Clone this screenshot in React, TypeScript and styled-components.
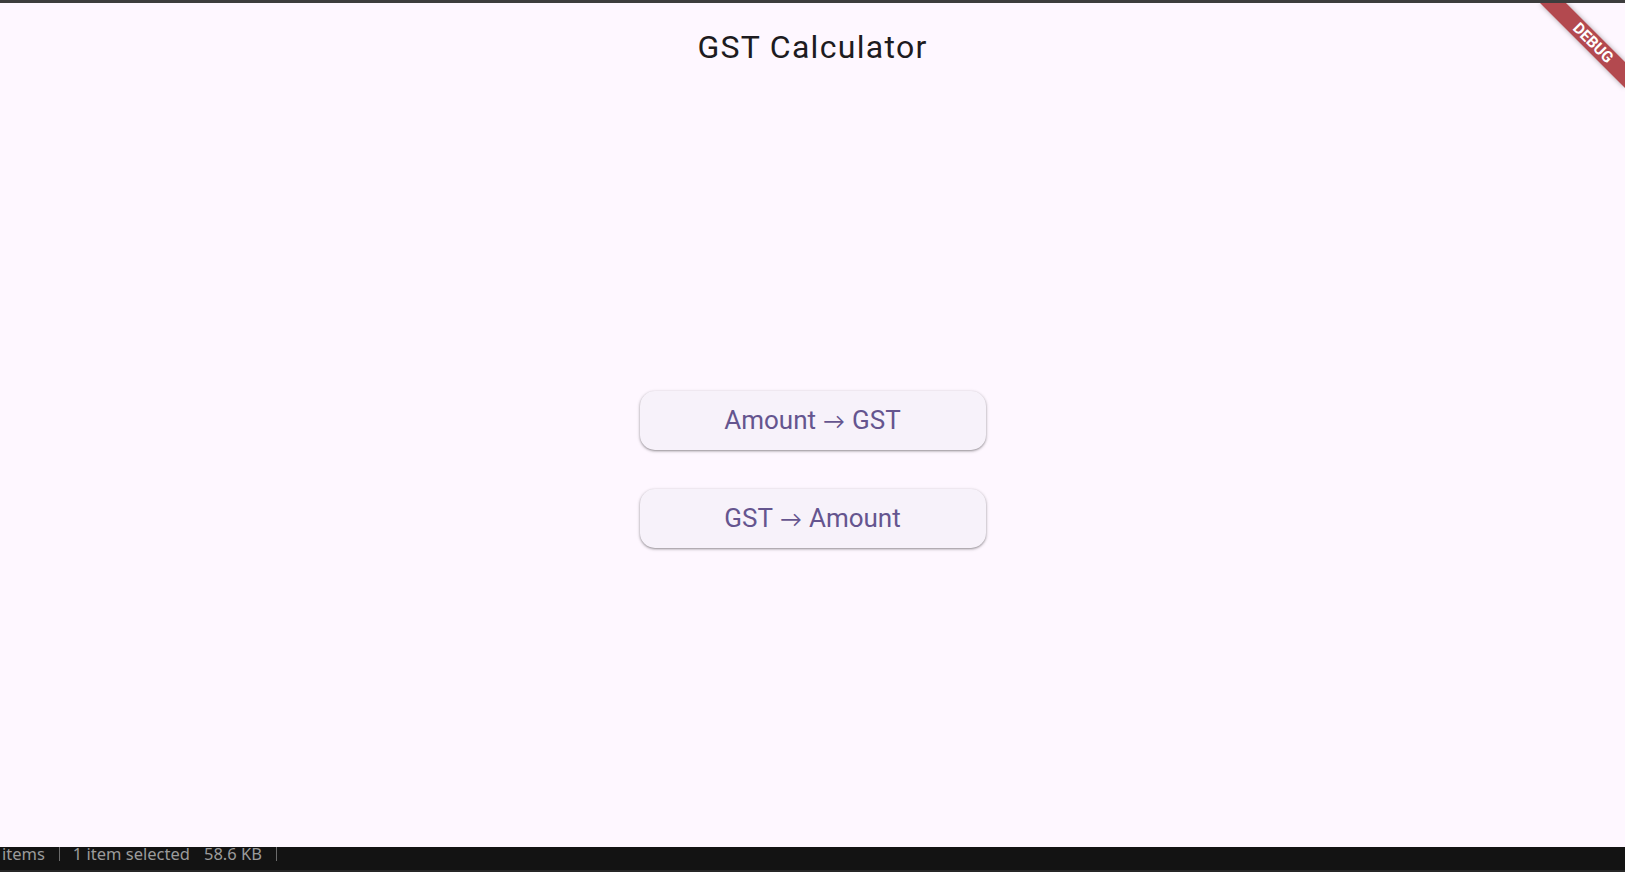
import styled, { createGlobalStyle } from "styled-components";

const GlobalStyle = createGlobalStyle`
  html, body {
    margin: 0;
    padding: 0;
    background: #131313;
  }
  #root {
    height: 872px;
  }
`

const Window = styled.div`
  display: flex;
  flex-direction: column;
  height: 872px;
  border-top: 3px solid #3d3d3d;
  box-sizing: border-box;
`

const AppArea = styled.div`
  position: relative;
  display: flex;
  flex-direction: column;
  height: 844px;
  background: #fef7ff;
  overflow: hidden;
`

const AppBar = styled.header`
  display: flex;
  align-items: center;
  justify-content: center;
  height: 88px;
  flex-shrink: 0;
`

const Title = styled.h1`
  margin: 0;
  font-family: Roboto, "Liberation Sans", sans-serif;
  font-weight: 400;
  font-size: 32px;
  color: #1d1b20;
  letter-spacing: 1.3px;
`

const Body = styled.main`
  flex: 1;
  display: flex;
  flex-direction: column;
  align-items: center;
  justify-content: center;
  gap: 39px;
`

const Button = styled.button`
  display: flex;
  align-items: center;
  justify-content: center;
  width: 346px;
  height: 59px;
  border: none;
  border-radius: 15px;
  background: #f7f2fa;
  color: #65558f;
  font-family: Roboto, "Liberation Sans", sans-serif;
  font-size: 26px;
  font-weight: 400;
  cursor: pointer;
  box-shadow: 0 1px 2px rgba(0, 0, 0, 0.3), 0 1px 3px 1px rgba(0, 0, 0, 0.12);
`

const Arrow = styled.span`
  font-family: Lato, sans-serif;
  font-size: 22px;
  margin: 0 7px;
`

const Banner = styled.svg`
  position: absolute;
  top: 0;
  right: 0;
  pointer-events: none;
`

const StatusBar = styled.footer`
  display: flex;
  align-items: center;
  height: 25px;
  box-sizing: border-box;
  padding-bottom: 11px;
  border-bottom: 2px solid #262626;
  background: #131313;
  font-family: "Noto Sans", "Open Sans", sans-serif;
  font-size: 16.5px;
  color: #9b9b9b;
  white-space: nowrap;
`

const StatusText = styled.span<{ $left: number }>`
  margin-left: ${({ $left }) => $left}px;
`

const Divider = styled.span<{ $left: number }>`
  margin-left: ${({ $left }) => $left}px;
  width: 1px;
  height: 15px;
  background: #6b6b6b;
`

function DebugBanner() {
  return (
    <Banner width="90" height="90" viewBox="0 0 90 90">
      <defs>
        <filter id="bshadow" x="-20%" y="-20%" width="140%" height="140%">
          <feDropShadow dx="0" dy="0" stdDeviation="2.5" floodColor="#000" floodOpacity="0.35" />
        </filter>
      </defs>
      <polygon points="5,0 31,0 90,59 90,85" fill="#b34a4f" filter="url(#bshadow)" />
      <text
        x="58"
        y="40"
        transform="rotate(45 58 40)"
        textAnchor="middle"
        dominantBaseline="central"
        fill="#ffffff"
        fontFamily="Roboto, 'Liberation Sans', sans-serif"
        fontWeight="700"
        fontSize="15.5"
      >
        DEBUG
      </text>
    </Banner>
  )
}

function App() {
  return (
    <>
      <GlobalStyle />
      <Window>
        <AppArea>
          <AppBar>
            <Title>GST Calculator</Title>
          </AppBar>
          <Body>
            <Button>Amount<Arrow>→</Arrow>GST</Button>
            <Button>GST<Arrow>→</Arrow>Amount</Button>
          </Body>
          <DebugBanner />
        </AppArea>
        <StatusBar>
          <StatusText $left={2}>items</StatusText>
          <Divider $left={14} />
          <StatusText $left={13}>1 item selected</StatusText>
          <StatusText $left={14}>58.6 KB</StatusText>
          <Divider $left={14} />
        </StatusBar>
      </Window>
    </>
  )
}

export default App
